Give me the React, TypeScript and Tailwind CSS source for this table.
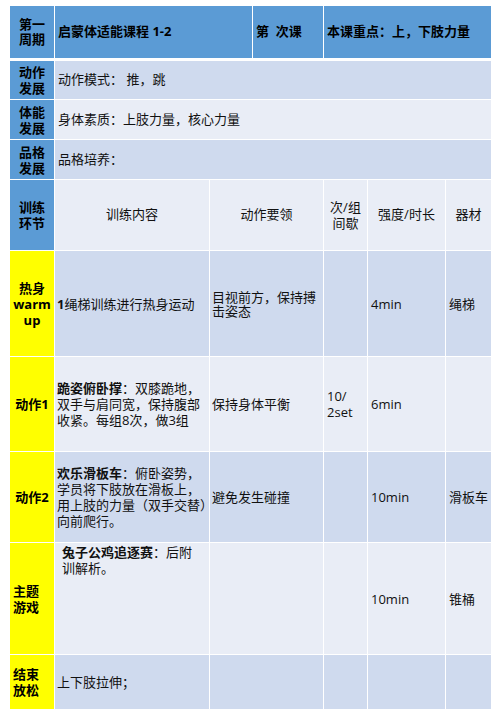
import React from "react";

const DARK = "bg-[#cfdaee]";
const LIGHT = "bg-[#e9edf6]";
const BLUE = "bg-[#5b9bd5]";
const YELLOW = "bg-[#ffff00]";

function Cell({ w, bg, className = "", children }: { w: string; bg: string; className?: string; children?: React.ReactNode }) {
  return <div className={`${w} ${bg} shrink-0 flex items-center ${className}`}>{children}</div>;
}

function Side({ bg, children, left }: { bg: string; children: React.ReactNode; left?: boolean }) {
  return (
    <Cell w="w-[44px]" bg={bg} className={left ? "justify-start pl-[3px]" : "justify-center text-center"}>
      <div className="font-bold leading-[16px] text-black">{children}</div>
    </Cell>
  );
}

type RowProps = {
  h: string;
  bg: string;
  side: React.ReactNode;
  sideBg: string;
  sideLeft?: boolean;
  cols: React.ReactNode[];
  topCol2?: boolean;
};

function TrainRow({ h, bg, side, sideBg, sideLeft, cols, topCol2 }: RowProps) {
  const widths = ["w-[154px]", "w-[113px]", "w-[43px]", "w-[77px]", "w-[45px]"];
  const pads = ["pl-[2px]", "pl-[2px]", "pl-[3px]", "pl-[3px]", "pl-[3px]"];
  return (
    <div className={`flex gap-px ${h}`}>
      <Side bg={sideBg} left={sideLeft}>{side}</Side>
      {cols.map((c, i) => (
        <Cell
          key={i}
          w={widths[i]}
          bg={bg}
          className={`${pads[i]} ${i === 0 && topCol2 ? "items-start pt-px" : ""} overflow-visible`}
        >
          <div className="leading-[16px] whitespace-nowrap">{c}</div>
        </Cell>
      ))}
    </div>
  );
}

export default function App() {
  return (
    <div
      className="w-[503px] h-[726px] bg-white pt-[6px] pl-[10px] text-[13px] text-[#111]"
      style={{ fontFamily: '"Open Sans", "Noto Sans CJK SC", sans-serif' }}
    >
      <div className="w-[481px] flex flex-col">
        {/* title row */}
        <div className="flex gap-px h-[52px]">
          <Cell w="w-[44px]" bg={BLUE} className="justify-center text-center">
            <div className="font-bold leading-[15px] text-black">第一<br />周期</div>
          </Cell>
          <Cell w="w-[197px]" bg={BLUE} className="pl-[3px] font-bold text-black">启蒙体适能课程 1-2</Cell>
          <Cell w="w-[70px]" bg={BLUE} className="pl-[3px] font-bold text-black">第&nbsp;&nbsp;次课</Cell>
          <Cell w="w-[167px]" bg={BLUE} className="pl-[3px] font-bold text-black">本课重点：上，下肢力量</Cell>
        </div>

        <div className="flex flex-col gap-px mt-[3px]">
          <div className="flex gap-px h-[38px]">
            <Side bg={BLUE}>动作<br />发展</Side>
            <Cell w="w-[436px]" bg={DARK} className="pl-[3px]">动作模式： 推，跳</Cell>
          </div>
          <div className="flex gap-px h-[39px]">
            <Side bg={BLUE}>体能<br />发展</Side>
            <Cell w="w-[436px]" bg={LIGHT} className="pl-[3px]">身体素质：上肢力量，核心力量</Cell>
          </div>
          <div className="flex gap-px h-[39px]">
            <Side bg={BLUE}>品格<br />发展</Side>
            <Cell w="w-[436px]" bg={DARK} className="pl-[3px]">品格培养：</Cell>
          </div>

          {/* header */}
          <div className="flex gap-px h-[70px]">
            <Side bg={BLUE}>训练<br />环节</Side>
            <Cell w="w-[154px]" bg={LIGHT} className="justify-center">训练内容</Cell>
            <Cell w="w-[113px]" bg={LIGHT} className="justify-center">动作要领</Cell>
            <Cell w="w-[43px]" bg={LIGHT} className="justify-center text-center">
              <div className="leading-[16px]">次/组<br />间歇</div>
            </Cell>
            <Cell w="w-[77px]" bg={LIGHT} className="justify-center">强度/时长</Cell>
            <Cell w="w-[45px]" bg={LIGHT} className="justify-center">器材</Cell>
          </div>

          <TrainRow
            h="h-[105px]"
            bg={DARK}
            sideBg={YELLOW}
            side={<>热身<br />warm<br />up</>}
            cols={[
              <><b>1</b>绳梯训练进行热身运动</>,
              <div className="leading-[14px]">目视前方，保持搏<br />击姿态</div>,
              "",
              "4min",
              "绳梯",
            ]}
          />
          <TrainRow
            h="h-[94px]"
            bg={LIGHT}
            sideBg={YELLOW}
            side="动作1"
            cols={[
              <><b>跪姿俯卧撑</b>：双膝跪地，<br />双手与肩同宽，保持腹部<br />收紧。每组8次，做3组</>,
              "保持身体平衡",
              <>10/<br />2set</>,
              "6min",
              "",
            ]}
          />
          <TrainRow
            h="h-[90px]"
            bg={DARK}
            sideBg={YELLOW}
            side="动作2"
            cols={[
              <><b>欢乐滑板车</b>：俯卧姿势，<br />学员将下肢放在滑板上，<br />用上肢的力量（双手交替）<br />向前爬行。</>,
              "避免发生碰撞",
              "",
              "10min",
              "滑板车",
            ]}
          />
          <TrainRow
            h="h-[111px]"
            bg={LIGHT}
            sideBg={YELLOW}
            sideLeft
            side={<>主题<br />游戏</>}
            topCol2
            cols={[
              <div className="pl-[5px]"><b>兔子公鸡追逐赛</b>：后附<br />训解析。</div>,
              "",
              "",
              "10min",
              "锥桶",
            ]}
          />
          <TrainRow
            h="h-[54px]"
            bg={DARK}
            sideBg={YELLOW}
            sideLeft
            side={<>结束<br />放松</>}
            cols={["上下肢拉伸；", "", "", "", ""]}
          />
        </div>
      </div>
    </div>
  );
}
